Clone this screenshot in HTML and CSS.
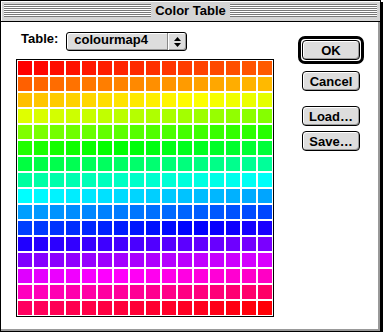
FILE: index.html
```html
<!DOCTYPE html>
<html lang="en">

<head>
    <meta charset="UTF-8">
    <meta name="viewport" content="width=device-width, initial-scale=1.0">
    <title>Color Table</title>
    <link rel="stylesheet" href="styles.css">
</head>

<body>
    <div class="window">
        <div class="titlebar">
            <span class="stripes"></span>
            <span class="title">Color Table</span>
            <span class="stripes"></span>
        </div>

        <div class="content">
            <div class="main">
                <div class="table-row">
                    <span class="label">Table:</span>
                    <div class="popup">
                        <span class="popup-text">colourmap4</span>
                        <span class="popup-arrows">
                            <svg width="7" height="10" viewBox="0 0 7 10">
                                <path d="M3.5 0 L7 4 L0 4 Z" fill="#000"/>
                                <path d="M0 6 L7 6 L3.5 10 Z" fill="#000"/>
                            </svg>
                        </span>
                    </div>
                </div>

                <!-- 256 swatches, filled by the script below -->
                <div class="swatches" id="swatches"></div>
            </div>

            <div class="buttons">
                <div class="default-ring">
                    <button class="btn">OK</button>
                </div>
                <button class="btn plain cancel">Cancel</button>
                <button class="btn plain load">Load…</button>
                <button class="btn plain save">Save…</button>
            </div>
        </div>
    </div>

    <script>
        const swatches = document.getElementById('swatches');

        // one cell per colour map entry, hue going round the wheel
        for (let i = 0; i < 256; i++) {
            const cell = document.createElement('div');
            cell.className = 'swatch';
            cell.style.background = 'hsl(' + (i * 360 / 256) + ', 100%, 50%)';
            swatches.appendChild(cell);
        }
    </script>
</body>

</html>
```

FILE: styles.css
```css
body {
    margin: 0;
    background-color: #fff;
    font-family: 'Liberation Sans', Arial, sans-serif;
    font-weight: bold;
    font-size: 13px;
    color: #000;
}

.window {
    box-sizing: border-box;
    width: 381px;
    height: 332px;
    border: 1px solid #000;
    background-color: #fff;
    box-shadow: inset -2px -2px 0 #999, 2px 2px 0 #000;
    display: flex;
    flex-direction: column;
}

/* Title bar */
.titlebar {
    display: flex;
    align-items: flex-start;
    height: 20px;
    padding: 0 3px;
    background-color: #d4d4d4;
    border-bottom: 1px solid #000;
    box-shadow: inset 1px 1px 0 #fff;
}

.stripes {
    flex: 1;
    height: 13px;
    margin-top: 3px;
    background: repeating-linear-gradient(to bottom, #777 0, #777 1px, #fff 1px, #fff 2px);
}

.title {
    padding: 0 4px;
    font-size: 13px;
    line-height: 20px;
}

/* Content */
.content {
    flex: 1;
    display: flex;
}

.main {
    padding: 10px 0 0 15px;
}

.table-row {
    display: flex;
    align-items: flex-start;
}

.label {
    margin-left: 5px;
    margin-right: 8px;
    line-height: 14px;
}

.popup {
    box-sizing: border-box;
    display: flex;
    width: 121px;
    height: 19px;
    border: 1px solid #000;
    border-radius: 3px;
    background-color: #ddd;
    box-shadow: inset 1px 1px 0 #fff, inset -1px -1px 0 #999;
}

.popup-text {
    flex: 1;
    padding-left: 7px;
    line-height: 14px;
}

.popup-arrows {
    width: 18px;
    display: flex;
    justify-content: center;
    align-items: center;
    border-left: 1px solid #888;
    box-shadow: inset 1px 0 0 #fff;
}

.swatches {
    display: grid;
    grid-template-columns: repeat(16, 14px);
    grid-auto-rows: 14px;
    gap: 2px;
    padding: 1px;
    margin-top: 8px;
    border: 1px solid #000;
    background-color: #fff;
}

/* Buttons */
.buttons {
    margin-left: auto;
    margin-right: 16px;
    padding-top: 14px;
    display: flex;
    flex-direction: column;
    width: 66px;
}

.default-ring {
    border: 3px solid #000;
    border-radius: 7px;
    padding: 1px;
}

.btn {
    box-sizing: border-box;
    width: 100%;
    height: 20px;
    padding: 0;
    border: 1px solid #000;
    border-radius: 4px;
    background-color: #ddd;
    box-shadow: inset 1px 1px 0 #fff, inset -1px -1px 0 #999;
    font-family: inherit;
    font-weight: bold;
    font-size: 13px;
    color: #000;
    cursor: pointer;
}

.btn.plain {
    width: auto;
    margin: 0 4px;
}

.cancel {
    margin-top: 7px !important;
}

.load {
    margin-top: 15px !important;
}

.save {
    margin-top: 5px !important;
}
```
